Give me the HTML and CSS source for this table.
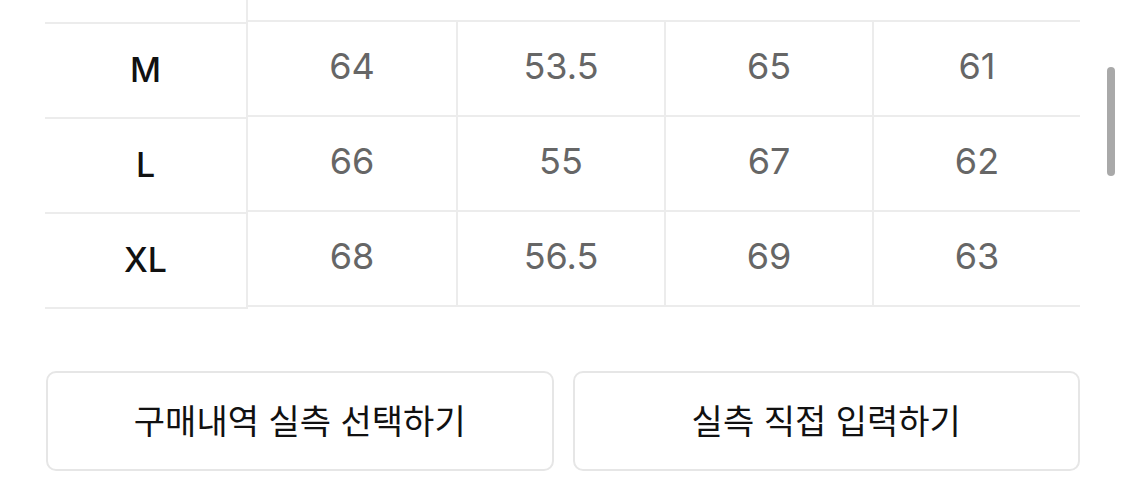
FILE: index.html
```html
<!DOCTYPE html>
<html lang="ko">
<head>
<meta charset="utf-8">
<link rel="stylesheet" href="styles.css">
</head>
<body>
<div class="page">
  <div class="size-table">
    <div class="size-col">
      <div class="size-stub"></div>
      <div class="size-cell">M</div>
      <div class="size-cell">L</div>
      <div class="size-cell last">XL</div>
    </div>
    <div class="data-col">
      <div class="data-stub"></div>
      <div class="data-grid">
        <div class="cell">64</div><div class="cell">53.5</div><div class="cell">65</div><div class="cell">61</div>
        <div class="cell">66</div><div class="cell">55</div><div class="cell">67</div><div class="cell">62</div>
        <div class="cell last">68</div><div class="cell last">56.5</div><div class="cell last">69</div><div class="cell last">63</div>
      </div>
    </div>
  </div>
  <div class="actions">
    <button class="btn">구매내역 실측 선택하기</button>
    <button class="btn">실측 직접 입력하기</button>
  </div>
  <div class="scrollbar"></div>
</div>
</body>
</html>
```
FILE: styles.css
```css
* { box-sizing: border-box; }
html, body { margin: 0; padding: 0; background: #fff; }
body { width: 1125px; height: 492px; overflow: hidden; font-family: Inter, "Noto Sans", "Noto Sans CJK KR", sans-serif; }
.page { position: relative; width: 1125px; height: 492px; padding: 0 45px 0 45px; }
.size-table { display: flex; width: 1035px; }
.size-col { width: 201px; display: flex; flex-direction: column; }
.size-stub { height: 22px; }
.size-cell {
  height: 95px; border-top: 2px solid #ececec;
  display: flex; align-items: center; justify-content: center;
  font-size: 34px; font-weight: 500; color: #111; padding-bottom: 2px;
}
.size-cell.last { border-bottom: 2px solid #ececec; height: 97px; }
.data-col { flex: 1; display: flex; flex-direction: column; border-left: 2px solid #ececec; }
.data-stub { height: 20px; }
.data-grid { display: grid; grid-template-columns: 208px 208px 208px 208px; }
.cell {
  height: 95px; border-top: 2px solid #ececec;
  display: flex; align-items: center; justify-content: center;
  font-size: 36px; font-weight: 400; color: #666; padding-bottom: 5px;
}
.cell:not(:nth-child(4n+1)) { border-left: 2px solid #ececec; }
.cell.last { border-bottom: 2px solid #ececec; height: 97px; }
.actions { display: flex; gap: 19px; margin-top: 62px; margin-left: 1px; width: 1034px; }
.btn {
  flex: 1; height: 100px; background: #fff; border: 2px solid #e6e6e6; border-radius: 10px;
  font-family: "Noto Sans CJK KR", sans-serif; font-size: 34px; font-weight: 400; color: #111;
  display: flex; align-items: center; justify-content: center; padding: 0 0 4px;
}
.scrollbar {
  position: absolute; left: 1107px; top: 67px; width: 8px; height: 109px;
  background: #a9a9a9; border-radius: 4px;
}
```
